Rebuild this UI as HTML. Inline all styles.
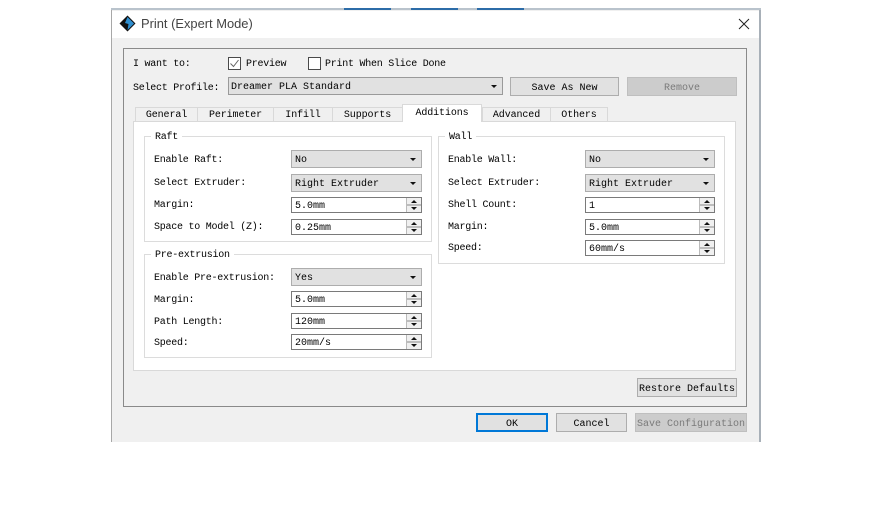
<!DOCTYPE html>
<html><head><meta charset="utf-8"><style>
html,body{margin:0;padding:0;background:#fff}
body{width:874px;height:524px;position:relative;overflow:hidden;font-family:"Liberation Mono",monospace}
div{position:absolute;box-sizing:border-box}
.t{font:10px/16px "Liberation Mono",monospace;color:#000;white-space:pre;letter-spacing:-.25px}
.b{background:#e1e1e1;border:1px solid #adadad;font:10px/21px "Liberation Mono",monospace;color:#000;text-align:center;white-space:pre}
.c{background:#e1e1e1;border:1px solid #adadad;font:10px/19px "Liberation Mono",monospace;color:#000;padding-left:3px;white-space:pre;left:291px;width:131px;height:18px}
.c:after{content:"";position:absolute;right:5px;top:7px;width:0;height:0;border-left:3px solid transparent;border-right:3px solid transparent;border-top:3px solid #111}
.s{background:#fff;border:1px solid #7a7a7a;font:10px/17px "Liberation Mono",monospace;color:#000;padding-left:3px;white-space:pre;left:291px;width:131px;height:16px}
.s:before{content:"";position:absolute;right:0;top:0;bottom:0;width:14px;background:linear-gradient(#f0f0f0,#f0f0f0 46%,#8a8a8a 46%,#8a8a8a 54%,#f0f0f0 54%);border-left:1px solid #bbb}
.s:after{content:"";position:absolute;right:4px;top:2px;width:0;height:0;border-left:3px solid transparent;border-right:3px solid transparent;border-bottom:3px solid #111}
.s i{position:absolute;right:4px;bottom:2px;width:0;height:0;border-left:3px solid transparent;border-right:3px solid transparent;border-top:3px solid #111;z-index:2}
.w{left:585px;width:130px}
.g{border:1px solid #dcdcdc;background:#fff}
.l{background:#fff;padding:0 4px;font:10px/16px "Liberation Mono",monospace;color:#000;white-space:pre;letter-spacing:-.25px}
.tab{background:#f0f0f0;border:1px solid #d9d9d9;border-bottom:0;top:107px;height:15px;font:10px/15px "Liberation Mono",monospace;color:#000;text-align:center;white-space:pre;letter-spacing:-.1px}
.ck{width:13px;height:13px;border:1px solid #4a4a4a;background:#fff;top:57px}
</style></head><body>
<div style="left:111px;top:8px;width:650px;height:3px;background:#b9c3cc"></div>
<div style="left:344px;top:8px;width:47px;height:3px;background:#2c6ca8"></div>
<div style="left:411px;top:8px;width:47px;height:3px;background:#2c6ca8"></div>
<div style="left:477px;top:8px;width:47px;height:3px;background:#2c6ca8"></div>
<div style="left:111px;top:10px;width:650px;height:432px;background:#f0f0f0;border-left:1px solid #a8a8a8;border-right:2px solid #a8b0b8"></div>
<div style="left:112px;top:11px;width:647px;height:27px;background:#fff"></div>
<svg style="position:absolute;left:119px;top:15px" width="17" height="17" viewBox="0 0 17 17"><path d="M8.5 0.5L16.5 8.5L8.5 16.5L0.5 8.5Z" fill="#111"/><path d="M8.5 2L15 8.5L8.5 15L9.5 9L6 8Z" fill="#2f8fd0"/></svg>
<div style="left:141px;top:17px;font:12.9px/14px 'Liberation Sans',sans-serif;color:#444;white-space:pre">Print (Expert Mode)</div>
<svg style="position:absolute;left:738px;top:18px" width="12" height="12" viewBox="0 0 12 12"><path d="M1 1L11 11M11 1L1 11" stroke="#222" stroke-width="1" fill="none"/></svg>

<div style="left:123px;top:48px;width:624px;height:359px;border:1px solid #8a8a8a"></div>
<div class="t" style="left:133px;top:57px">I want to:</div>
<div class="ck" style="left:228px"></div>
<svg style="position:absolute;left:228px;top:57px" width="13" height="13" viewBox="0 0 13 13"><path d="M2.5 6.5L5.5 9.5L10.5 3" stroke="#666" fill="none"/></svg>
<div class="t" style="left:246px;top:57px">Preview</div>
<div class="ck" style="left:308px"></div>
<div class="t" style="left:325px;top:57px">Print When Slice Done</div>
<div class="t" style="left:133px;top:81px">Select Profile:</div>
<div class="c" style="left:228px;top:77px;width:275px;padding-left:2px;border-color:#9a9a9a;line-height:19px">Dreamer PLA Standard</div>
<div class="b" style="left:510px;top:77px;width:109px;height:19px">Save As New</div>
<div class="b" style="left:627px;top:77px;width:110px;height:19px;background:#ccc;border-color:#bfbfbf;color:#7a7a7a">Remove</div>

<div class="tab" style="left:135px;width:63px">General</div>
<div class="tab" style="left:197px;width:77px">Perimeter</div>
<div class="tab" style="left:273px;width:60px">Infill</div>
<div class="tab" style="left:332px;width:71px">Supports</div>
<div class="tab" style="left:482px;width:69px">Advanced</div>
<div class="tab" style="left:550px;width:58px">Others</div>
<div style="left:133px;top:121px;width:603px;height:250px;background:#fff;border:1px solid #d9d9d9"></div>
<div class="tab" style="left:402px;width:80px;top:104px;height:18px;background:#fff;line-height:18px">Additions</div>

<div class="g" style="left:144px;top:136px;width:288px;height:106px"></div>
<div class="l" style="left:151px;top:130px;height:14px">Raft</div>
<div class="t" style="left:154px;top:153px">Enable Raft:</div>
<div class="c" style="top:150px">No</div>
<div class="t" style="left:154px;top:176px">Select Extruder:</div>
<div class="c" style="top:174px">Right Extruder</div>
<div class="t" style="left:154px;top:198px">Margin:</div>
<div class="s" style="top:197px"><i></i>5.0mm</div>
<div class="t" style="left:154px;top:220px">Space to Model (Z):</div>
<div class="s" style="top:219px"><i></i>0.25mm</div>

<div class="g" style="left:144px;top:254px;width:288px;height:104px"></div>
<div class="l" style="left:151px;top:248px;height:14px">Pre-extrusion</div>
<div class="t" style="left:154px;top:271px">Enable Pre-extrusion:</div>
<div class="c" style="top:268px">Yes</div>
<div class="t" style="left:154px;top:293px">Margin:</div>
<div class="s" style="top:291px"><i></i>5.0mm</div>
<div class="t" style="left:154px;top:315px">Path Length:</div>
<div class="s" style="top:313px"><i></i>120mm</div>
<div class="t" style="left:154px;top:336px">Speed:</div>
<div class="s" style="top:334px"><i></i>20mm/s</div>

<div class="g" style="left:438px;top:136px;width:287px;height:128px"></div>
<div class="l" style="left:445px;top:130px;height:14px">Wall</div>
<div class="t" style="left:448px;top:153px">Enable Wall:</div>
<div class="c w" style="top:150px">No</div>
<div class="t" style="left:448px;top:176px">Select Extruder:</div>
<div class="c w" style="top:174px">Right Extruder</div>
<div class="t" style="left:448px;top:198px">Shell Count:</div>
<div class="s w" style="top:197px"><i></i>1</div>
<div class="t" style="left:448px;top:220px">Margin:</div>
<div class="s w" style="top:219px"><i></i>5.0mm</div>
<div class="t" style="left:448px;top:241px">Speed:</div>
<div class="s w" style="top:240px"><i></i>60mm/s</div>

<div class="b" style="left:637px;top:378px;width:100px;height:19px">Restore Defaults</div>
<div class="b" style="left:476px;top:413px;width:72px;height:19px;border:2px solid #0078d7;line-height:19px">OK</div>
<div class="b" style="left:556px;top:413px;width:71px;height:19px">Cancel</div>
<div class="b" style="left:635px;top:413px;width:112px;height:19px;background:#ccc;border-color:#bfbfbf;color:#7a7a7a">Save Configuration</div>
</body></html>
